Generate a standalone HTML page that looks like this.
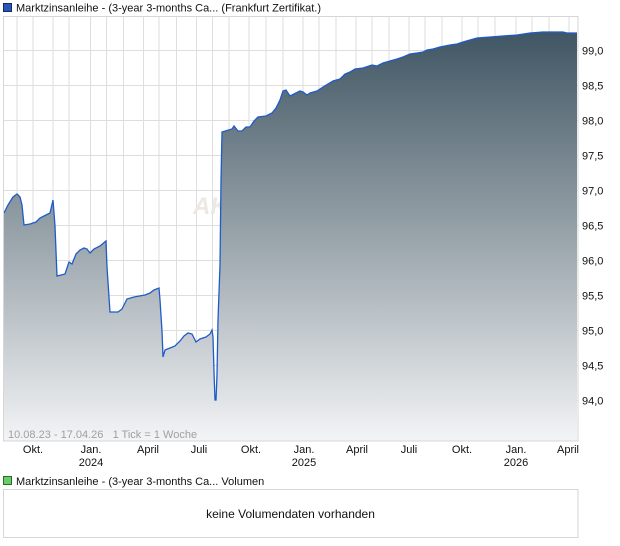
<!DOCTYPE html>
<html><head><meta charset="utf-8"><style>
html,body{margin:0;padding:0;background:#fff;width:620px;height:546px;overflow:hidden;font-family:"Liberation Sans",sans-serif;}
</style></head><body>
<svg width="620" height="546" xmlns="http://www.w3.org/2000/svg" style="position:absolute;left:0;top:0">
<defs>
<linearGradient id="g" x1="0" y1="30" x2="0" y2="441" gradientUnits="userSpaceOnUse">
<stop offset="0" stop-color="#3f5563"/>
<stop offset="0.5" stop-color="#98a3aa"/>
<stop offset="1" stop-color="#f3f4f6"/>
</linearGradient>
</defs>
<rect x="3.5" y="3.5" width="8" height="8" fill="#2457b8" stroke="#1a2a55"/>
<text x="16" y="11.5" font-size="11" fill="#111">Marktzinsanleihe - (3-year 3-months Ca... (Frankfurt Zertifikat.)</text>
<g stroke="#dedede" stroke-width="1">
<line x1="17" y1="16" x2="17" y2="441"/><line x1="33" y1="16" x2="33" y2="441"/><line x1="53" y1="16" x2="53" y2="441"/><line x1="69" y1="16" x2="69" y2="441"/>
<line x1="90.5" y1="16" x2="90.5" y2="441"/><line x1="106.5" y1="16" x2="106.5" y2="441"/><line x1="123.5" y1="16" x2="123.5" y2="441"/><line x1="143.5" y1="16" x2="143.5" y2="441"/>
<line x1="159" y1="16" x2="159" y2="441"/><line x1="176.5" y1="16" x2="176.5" y2="441"/><line x1="196.5" y1="16" x2="196.5" y2="441"/><line x1="212.5" y1="16" x2="212.5" y2="441"/>
<line x1="229" y1="16" x2="229" y2="441"/><line x1="249" y1="16" x2="249" y2="441"/><line x1="266" y1="16" x2="266" y2="441"/><line x1="283" y1="16" x2="283" y2="441"/>
<line x1="303" y1="16" x2="303" y2="441"/><line x1="319" y1="16" x2="319" y2="441"/><line x1="336" y1="16" x2="336" y2="441"/><line x1="356" y1="16" x2="356" y2="441"/>
<line x1="372" y1="16" x2="372" y2="441"/><line x1="389" y1="16" x2="389" y2="441"/><line x1="409" y1="16" x2="409" y2="441"/><line x1="425" y1="16" x2="425" y2="441"/>
<line x1="442" y1="16" x2="442" y2="441"/><line x1="462" y1="16" x2="462" y2="441"/><line x1="478" y1="16" x2="478" y2="441"/><line x1="495" y1="16" x2="495" y2="441"/>
<line x1="516" y1="16" x2="516" y2="441"/><line x1="532" y1="16" x2="532" y2="441"/><line x1="549" y1="16" x2="549" y2="441"/><line x1="569" y1="16" x2="569" y2="441"/>
<line x1="3" y1="50.5" x2="578" y2="50.5"/><line x1="3" y1="85.5" x2="578" y2="85.5"/><line x1="3" y1="120.5" x2="578" y2="120.5"/><line x1="3" y1="155.5" x2="578" y2="155.5"/>
<line x1="3" y1="190.5" x2="578" y2="190.5"/><line x1="3" y1="225.5" x2="578" y2="225.5"/><line x1="3" y1="260.5" x2="578" y2="260.5"/><line x1="3" y1="295.5" x2="578" y2="295.5"/>
<line x1="3" y1="330.5" x2="578" y2="330.5"/><line x1="3" y1="365.5" x2="578" y2="365.5"/><line x1="3" y1="400.5" x2="578" y2="400.5"/>
</g>
<text x="193" y="214" font-size="24" font-style="italic" font-weight="bold" fill="#ece8e4">AK</text>
<path fill="url(#g)" stroke="none" d="M4,441 L4,213 L8,205 L13,197 L17,194 L20,197 L22,205 L24,225 L30,224 L36,222 L40,218 L44,216 L50,213 L53,200 L55,226 L57,276 L65,274 L69,262 L72,264 L76,254 L80,250 L84,248 L87,249 L90,253 L94,249 L100,246 L106,241 L107,267 L110,312 L118,312 L122,309 L127,299 L134,297 L145,295 L150,293 L154,290 L159,288 L160,300 L162,331 L163,357 L165,350 L170,348 L175,346 L180,341 L184,336 L188,333 L192,334 L196,342 L200,339 L206,337 L210,334 L212,330 L213,337 L214,372 L215,400 L216,400 L217,375 L218,320 L220,265 L221,180 L222,132 L232,129 L234,126 L238,131 L242,131 L246,127 L250,127 L254,121 L258,117 L266,116 L272,113 L276,108 L280,100 L283,91 L286,90 L290,96 L300,91 L303,92 L307,95 L310,93 L317,91 L323,87 L333,81 L340,79 L345,74 L350,72 L355,69 L363,68 L372,65 L377,66 L383,63 L390,61 L397,59 L403,57 L410,54 L417,53 L423,52 L427,50 L433,49 L440,47 L450,45 L457,44 L463,42 L470,40 L477,38 L490,37 L503,36 L517,35 L530,33 L543,32 L557,32 L563,32 L567,33 L577,33 L577,441 Z"/>
<path fill="none" stroke="#1f5bc8" stroke-width="1.3" d="M4,213 L8,205 L13,197 L17,194 L20,197 L22,205 L24,225 L30,224 L36,222 L40,218 L44,216 L50,213 L53,200 L55,226 L57,276 L65,274 L69,262 L72,264 L76,254 L80,250 L84,248 L87,249 L90,253 L94,249 L100,246 L106,241 L107,267 L110,312 L118,312 L122,309 L127,299 L134,297 L145,295 L150,293 L154,290 L159,288 L160,300 L162,331 L163,357 L165,350 L170,348 L175,346 L180,341 L184,336 L188,333 L192,334 L196,342 L200,339 L206,337 L210,334 L212,330 L213,337 L214,372 L215,400 L216,400 L217,375 L218,320 L220,265 L221,180 L222,132 L232,129 L234,126 L238,131 L242,131 L246,127 L250,127 L254,121 L258,117 L266,116 L272,113 L276,108 L280,100 L283,91 L286,90 L290,96 L300,91 L303,92 L307,95 L310,93 L317,91 L323,87 L333,81 L340,79 L345,74 L350,72 L355,69 L363,68 L372,65 L377,66 L383,63 L390,61 L397,59 L403,57 L410,54 L417,53 L423,52 L427,50 L433,49 L440,47 L450,45 L457,44 L463,42 L470,40 L477,38 L490,37 L503,36 L517,35 L530,33 L543,32 L557,32 L563,32 L567,33 L577,33"/>
<rect x="3.5" y="16.5" width="574.5" height="424.5" fill="none" stroke="#d6d6d6"/>
<g font-size="11" fill="#111">
<text x="582" y="54.5">99,0</text><text x="582" y="89.5">98,5</text><text x="582" y="124.5">98,0</text><text x="582" y="159.5">97,5</text>
<text x="582" y="194.5">97,0</text><text x="582" y="229.5">96,5</text><text x="582" y="264.5">96,0</text><text x="582" y="299.5">95,5</text>
<text x="582" y="334.5">95,0</text><text x="582" y="369.5">94,5</text><text x="582" y="404.5">94,0</text>
</g>
<text x="8" y="438" font-size="11" fill="#a0a0a0" xml:space="preserve" style="white-space:pre">10.08.23 - 17.04.26   1 Tick = 1 Woche</text>
<g font-size="11" fill="#111" text-anchor="middle">
<text x="33" y="453">Okt.</text><text x="91" y="453">Jan.</text><text x="91" y="466">2024</text>
<text x="148" y="453">April</text><text x="199" y="453">Juli</text><text x="251" y="453">Okt.</text>
<text x="304" y="453">Jan.</text><text x="304" y="466">2025</text><text x="357" y="453">April</text>
<text x="409" y="453">Juli</text><text x="462" y="453">Okt.</text><text x="516" y="453">Jan.</text><text x="516" y="466">2026</text>
<text x="568" y="453">April</text>
</g>
<rect x="3.5" y="476.5" width="8" height="8" fill="#66cc66" stroke="#2d6b2d"/>
<text x="16" y="485" font-size="11" fill="#111">Marktzinsanleihe - (3-year 3-months Ca... Volumen</text>
<rect x="3.5" y="489.5" width="574.5" height="48" fill="#fff" stroke="#d6d6d6"/>
<text x="290.5" y="518" font-size="12" fill="#111" text-anchor="middle">keine Volumendaten vorhanden</text>
</svg>
</body></html>
